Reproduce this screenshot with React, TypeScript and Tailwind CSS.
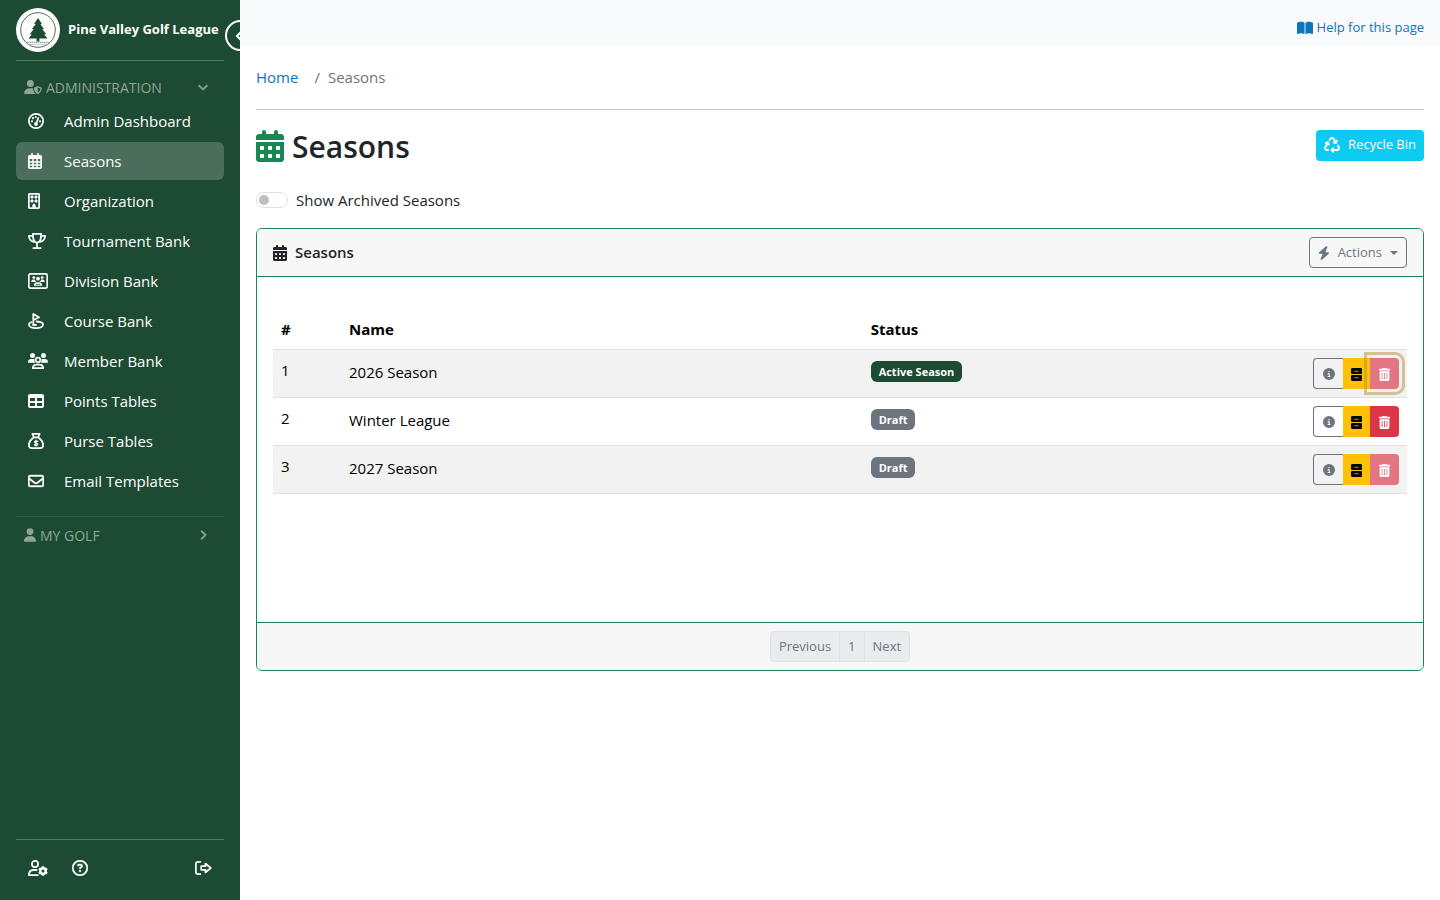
import type { ReactNode } from "react";
import {
  FaBolt,
  FaBookOpen,
  FaCalendarDays,
  FaChevronDown,
  FaChevronRight,
  FaCircleInfo,
  FaRecycle,
  FaRegBuilding,
  FaRegCircleQuestion,
  FaRegEnvelope,
  FaTable,
  FaTrashCan,
  FaUser,
  FaUserShield,
} from "react-icons/fa6";

interface Season {
  id: number;
  name: string;
  status: "Active Season" | "Draft";
  canDelete: boolean;
  highlighted?: boolean;
}

const seasons: Season[] = [
  { id: 1, name: "2026 Season", status: "Active Season", canDelete: false, highlighted: true },
  { id: 2, name: "Winter League", status: "Draft", canDelete: true },
  { id: 3, name: "2027 Season", status: "Draft", canDelete: false },
];

function LogoMark() {
  return (
    <svg viewBox="0 0 44 44" className="size-11 shrink-0" aria-hidden="true">
      <circle cx="22" cy="22" r="22" fill="#fff" />
      <circle cx="22" cy="22" r="17.3" fill="#fbfcfb" stroke="#4f6b5b" strokeWidth="1" />
      <path
        d="M22 10l4 6h-1.7l3.7 5h-1.8l4 5.200h-2l3.200 4.300h-8v3h-2.800v-3h-8l3.200-4.300h-2l4-5.200h-1.800l3.700-5H18z"
        fill="#1d4b33"
      />
      <path d="M10.500 34.300h23" stroke="#8a9c91" strokeWidth="1.200" strokeDasharray="1.200 .7" />
      <path d="M13 36.500h18" stroke="#b3c0b8" strokeWidth=".7" />
    </svg>
  );
}

function GaugeIcon() {
  return (
    <svg viewBox="0 0 16 16" className="size-4" fill="none" stroke="currentColor" strokeWidth="1.700">
      <circle cx="8" cy="8" r="7.150" />
      <path d="M8.300 10.200l2-5.200" strokeLinecap="round" />
      <circle cx="8" cy="11" r="1.900" fill="currentColor" stroke="none" />
      <g fill="currentColor" stroke="none">
        <circle cx="4" cy="8.300" r="1.100" />
        <circle cx="5" cy="5.200" r="1.100" />
        <circle cx="7.800" cy="4" r="1.100" />
        <circle cx="12" cy="8.300" r="1.100" />
      </g>
    </svg>
  );
}

function CalendarGridIcon() {
  return (
    <svg viewBox="0 0 14 16" className="h-4" fill="none" stroke="currentColor">
      <path d="M4 .8v3M10 .8v3" strokeWidth="1.700" strokeLinecap="round" />
      <path d="M0 4a2 2 0 012-2h10a2 2 0 012 2v2H0z" fill="currentColor" stroke="none" />
      <rect x=".8" y="3" width="12.400" height="12.200" rx="1.300" strokeWidth="1.700" />
      <path d="M1 9h12M1 12h12M5 6v9M9 6v9" strokeWidth="1.500" />
    </svg>
  );
}

function TrophyIcon() {
  return (
    <svg
      viewBox="0 0 18 16"
      className="h-4"
      fill="none"
      stroke="currentColor"
      strokeWidth="1.700"
      strokeLinecap="round"
      strokeLinejoin="round"
    >
      <path d="M4.800 .9h8.400c0 5-1.200 8.700-4.200 8.700S4.800 5.900 4.800 .9z" />
      <path d="M4.700 2.800H.9c0 3.500 2 5.400 5 6M13.300 2.800h3.800c0 3.500-2 5.400-5 6M9 9.800v5M5.300 15.100h7.400" />
    </svg>
  );
}

function PeopleIcon() {
  return (
    <svg viewBox="0 0 20 16" className="h-4" fill="none" stroke="currentColor">
      <g fill="currentColor" stroke="none">
        <circle cx="4.500" cy="2.500" r="2.500" />
        <circle cx="15.500" cy="2.500" r="2.500" />
        <path d="M0 9.200C0 7.200 1.400 6 3.200 6h2.200c.4 0 .8.100 1.100.2-.3 1.300 0 2.500.8 3.500H.5a.5.5 0 01-.5-.5zM20 9.200c0-2-1.400-3.200-3.200-3.200h-2.200c-.4 0-.8.100-1.100.2.3 1.300 0 2.500-.8 3.500h6.800c.3 0 .5-.2.5-.5z" />
      </g>
      <circle cx="10" cy="7" r="2.300" strokeWidth="1.700" />
      <path
        d="M4.800 15.100c.2-2.200 1.700-3.500 3.700-3.500h3c2 0 3.500 1.300 3.700 3.500z"
        strokeWidth="1.800"
        strokeLinejoin="round"
      />
    </svg>
  );
}

function ScreenUsersIcon() {
  return (
    <svg viewBox="0 0 20 16" className="h-4" fill="currentColor">
      <rect x=".8" y=".8" width="18.400" height="14.400" rx="1.800" fill="none" stroke="currentColor" strokeWidth="1.700" />
      <circle cx="5.800" cy="4.600" r="1.400" />
      <circle cx="14.200" cy="4.600" r="1.400" />
      <circle cx="10" cy="5.700" r="1.900" />
      <path d="M3.200 8.900c0-1.400.9-2.400 2.200-2.400h1.400c.4 1.300 1 1.900 1.300 2.400zM16.800 8.900c0-1.400-.9-2.400-2.200-2.400h-1.400c-.4 1.300-1 1.900-1.300 2.400z" />
      <path d="M5.800 12.800c0-2.200 1.300-3.600 3.100-3.600h2.200c1.800 0 3.100 1.400 3.100 3.600z" />
      <path d="M8 11.300h4" stroke="#1d4a32" strokeWidth=".8" />
    </svg>
  );
}

function GolfFlagIcon() {
  return (
    <svg
      viewBox="0 0 16 16"
      className="size-4"
      fill="none"
      stroke="currentColor"
      strokeWidth="1.800"
      strokeLinecap="round"
      strokeLinejoin="round"
    >
      <path d="M5.300 11.800V1l5.700 3.200-5.700 3" />
      <path d="M3.300 9.200C1.800 9.800.9 10.600.9 11.600.9 13.600 4 15.100 8 15.100s7.100-1.500 7.100-3.500S12.500 8.700 8.700 8.500" />
      <path d="M5.300 12h2.700" />
    </svg>
  );
}

function SackIcon() {
  return (
    <svg viewBox="0 0 16 16" className="size-4" fill="none" stroke="currentColor" strokeLinejoin="round">
      <path
        d="M4.300.9h7.400L10 4.300H6zM6 4.300C3.500 6 .9 9 .9 12.300c0 1.800 1 2.800 2.900 2.800h8.400c1.900 0 2.900-1 2.900-2.800C15.100 9 12.500 6 10 4.300z"
        strokeWidth="1.700"
      />
      <path
        d="M9.800 8.400C9 8 6.500 7.700 6.500 9s3.200.8 3.200 2.200c0 1.300-2.400 1.100-3.400.6M8 7.100v6"
        strokeWidth="1.300"
        strokeLinecap="round"
      />
    </svg>
  );
}

function UserGearIcon() {
  return (
    <svg viewBox="0 0 20 16" className="h-4" fill="none" stroke="currentColor" strokeWidth="1.800">
      <circle cx="7" cy="4" r="3.100" />
      <path d="M9.800 15.100H.9c0-3.200 2-5.100 4.700-5.100h3" strokeLinecap="round" strokeLinejoin="round" />
      <circle cx="15" cy="11" r="2.700" strokeWidth="2.400" />
      <path
        d="M15 6.200v2M15 13.800v2M10.900 8.600l1.700 1M17.400 12.400l1.700 1M10.900 13.400l1.700-1M17.400 9.600l1.700-1"
        strokeWidth="2.400"
      />
    </svg>
  );
}

function SignOutIcon() {
  return (
    <svg
      viewBox="0 0 17 16"
      className="h-4"
      fill="none"
      stroke="currentColor"
      strokeWidth="1.700"
      strokeLinecap="round"
      strokeLinejoin="round"
    >
      <path d="M5.300 1.800H3.200C1.800 1.800.9 2.700.9 4v8c0 1.300.9 2.200 2.300 2.200h2.100" />
      <path d="M6.200 6.200h4.200V3.500L15.800 8l-5.400 4.500V9.800H6.200z" />
    </svg>
  );
}

function CabinetIcon() {
  return (
    <svg viewBox="0 0 12 14" className="h-[13px]" fill="#000">
      <rect x="0" y="0" width="12" height="6.500" rx="1.500" />
      <rect x="0" y="7.500" width="12" height="6.500" rx="1.500" />
      <path d="M3.500 3.500h5M3.500 10.500h5" stroke="#ffc107" strokeWidth=".8" />
    </svg>
  );
}

const navItems: { label: string; icon: ReactNode; active?: boolean }[] = [
  { label: "Admin Dashboard", icon: <GaugeIcon /> },
  { label: "Seasons", icon: <CalendarGridIcon />, active: true },
  { label: "Organization", icon: <FaRegBuilding className="w-3 h-4 stroke-[14]" /> },
  { label: "Tournament Bank", icon: <TrophyIcon /> },
  { label: "Division Bank", icon: <ScreenUsersIcon /> },
  { label: "Course Bank", icon: <GolfFlagIcon /> },
  { label: "Member Bank", icon: <PeopleIcon /> },
  { label: "Points Tables", icon: <FaTable className="size-4" /> },
  { label: "Purse Tables", icon: <SackIcon /> },
  { label: "Email Templates", icon: <FaRegEnvelope className="size-4 stroke-[12]" /> },
];

function Sidebar() {
  return (
    <aside className="relative w-60 shrink-0 overflow-hidden bg-[#1d4a32] px-4 pt-2 text-white flex flex-col">
      <a href="#" className="flex items-center gap-2 pb-2 border-b border-[#4b7d61]">
        <LogoMark />
        <span className="text-[13px] font-bold whitespace-nowrap">Pine Valley Golf League</span>
      </a>
      <button
        type="button"
        aria-label="Collapse sidebar"
        className="absolute top-5 -right-4 size-[31px] rounded-full border-2 border-white bg-[#1d4a32] flex items-center pl-2"
      >
        <svg viewBox="0 0 8 10" className="h-2.5" fill="none" stroke="currentColor" strokeWidth="2">
          <path d="M6 1L2 5l4 4" />
        </svg>
      </button>

      <button type="button" className="mt-3.5 h-6 px-2 flex items-center gap-1 text-[14px] text-[#8ea598]">
        <FaUserShield className="h-3.5 w-[18px]" />
        <span>ADMINISTRATION</span>
        <FaChevronDown className="ml-auto mr-2 size-2.5 stroke-[40]" />
      </button>

      <nav className="mt-[3px] flex flex-col gap-0.5">
        {navItems.map((item) => (
          <a
            key={item.label}
            href="#"
            className={`h-[38px] px-3 flex items-center rounded-md text-[15px] ${item.active ? "bg-[#4a6e5b]" : ""}`}
          >
            <span className="w-9 flex">{item.icon}</span>
            {item.label}
          </a>
        ))}
      </nav>

      <div className="mt-4 pt-1.5 border-t border-[#2d5841]">
        <button type="button" className="w-full h-6 px-2 flex items-center gap-1 text-[14px] text-[#8ea598]">
          <FaUser className="h-3.5 w-3" />
          <span>MY GOLF</span>
          <FaChevronRight className="ml-auto mr-2 size-2.5 stroke-[40]" />
        </button>
      </div>

      <div className="mt-auto h-[61px] px-3 pb-1 flex items-center border-t border-[#4b7d61]">
        <button type="button" aria-label="Account settings">
          <UserGearIcon />
        </button>
        <button type="button" aria-label="Support" className="ml-6">
          <FaRegCircleQuestion className="size-4 stroke-[12]" />
        </button>
        <button type="button" aria-label="Sign out" className="ml-auto">
          <SignOutIcon />
        </button>
      </div>
    </aside>
  );
}

function RowActions({ season }: { season: Season }) {
  return (
    <div className="flex justify-end">
      <button
        type="button"
        aria-label={`${season.name} details`}
        className="w-[30px] h-[31px] pt-0.5 flex items-center justify-center rounded-l border border-r-0 border-[#6c757d] text-[#6c757d]"
      >
        <FaCircleInfo className="size-3" />
      </button>
      <button
        type="button"
        aria-label={`Archive ${season.name}`}
        className="w-[27px] h-[31px] pt-0.5 flex items-center justify-center bg-[#ffc107]"
      >
        <CabinetIcon />
      </button>
      <button
        type="button"
        aria-label={`Delete ${season.name}`}
        disabled={!season.canDelete}
        className={`w-[29px] h-[31px] pt-0.5 flex items-center justify-center rounded-r text-white ${
          season.canDelete ? "bg-[#dc3545]" : "bg-[#e27681]"
        } ${season.highlighted ? "outline-3 outline-offset-3 outline-[#b58e3c]/50" : ""}`}
      >
        <FaTrashCan className="size-[13px]" />
      </button>
    </div>
  );
}

function SeasonsTable() {
  return (
    <table className="w-full mt-4 table-fixed text-left text-[15px] text-black">
      <thead>
        <tr className="h-10 border-b border-[#dee2e6]">
          <th className="w-[68px] px-2 font-bold">#</th>
          <th className="w-[46%] px-2 font-bold">Name</th>
          <th className="px-2 font-bold">Status</th>
          <th className="w-28 px-2" aria-label="Actions"></th>
        </tr>
      </thead>
      <tbody>
        {seasons.map((season) => (
          <tr key={season.id} className="h-12 border-b border-[#dee2e6] odd:bg-[#f2f2f2]">
            <td className="px-2 pb-1.5">{season.id}</td>
            <td className="px-2 pb-0.5">{season.name}</td>
            <td className="px-2 pb-1.5">
              <span
                className={`inline-block h-[21px] px-2 rounded-md text-[11px] leading-[21px] font-bold text-white ${
                  season.status === "Draft" ? "bg-[#6c757d]" : "bg-[#1d4a32]"
                }`}
              >
                {season.status}
              </span>
            </td>
            <td className="px-2">
              <RowActions season={season} />
            </td>
          </tr>
        ))}
      </tbody>
    </table>
  );
}

export default function App() {
  return (
    <div className="min-h-screen flex bg-white text-[15px] text-[#212529] font-['Open_Sans','Noto_Sans',sans-serif]">
      <Sidebar />
      <div className="flex-1 min-w-0">
        <header className="h-[45px] px-4 pt-2.5 flex items-center justify-end bg-[#f8fafc]">
          <a href="#" className="flex items-center gap-1 text-[13px] text-[#0b76bd]">
            <FaBookOpen className="size-4" />
            Help for this page
          </a>
        </header>

        <main className="px-4">
          <nav aria-label="Breadcrumb" className="h-16 flex items-center">
            <a href="#" className="text-[#0b76bd]">
              Home
            </a>
            <span className="ml-4 text-[#6c757d]">/</span>
            <span className="ml-2 text-[#6c757d]">Seasons</span>
          </nav>
          <hr className="border-[#c3c5c7]" />

          <div className="mt-4 flex items-center justify-between">
            <h1 className="h-10 flex items-center gap-2 text-[30px] font-semibold">
              <FaCalendarDays className="h-8 w-7 text-[#198754]" />
              Seasons
            </h1>
            <button
              type="button"
              className="mb-0.5 h-[31px] px-2 flex items-center gap-2 rounded bg-[#0dcaf0] text-[13px] text-white"
            >
              <FaRecycle className="size-4" />
              Recycle Bin
            </button>
          </div>

          <label className="mt-[22px] h-6 flex items-center gap-2">
            <input
              type="checkbox"
              role="switch"
              className="appearance-none w-8 h-4 rounded-full border border-[#dee2e6] bg-white flex items-center before:ml-0.5 before:size-2.5 before:rounded-full before:bg-[#bfbfbf] checked:before:ml-4"
            />
            Show Archived Seasons
          </label>

          <section className="mt-4 rounded-md border border-[#198754] overflow-hidden">
            <div className="h-12 px-4 flex items-center justify-between bg-[#f7f7f7] border-b border-[#198754]">
              <h2 className="flex items-center gap-2 font-semibold">
                <FaCalendarDays className="h-4 w-3.5" />
                Seasons
              </h2>
              <button
                type="button"
                className="h-[31px] px-2 flex items-center gap-2 rounded border border-[#6c757d] text-[13px] text-[#6c757d]"
              >
                <FaBolt className="h-3.5 w-3" />
                Actions
                <span className="border-x-4 border-t-4 border-x-transparent border-t-[#6c757d]"></span>
              </button>
            </div>
            <div className="min-h-[345px] p-4">
              <SeasonsTable />
            </div>
            <div className="h-12 flex items-center justify-center bg-[#f7f7f7] border-t border-[#198754]">
              <div className="h-[31px] flex rounded border border-[#dee2e6] bg-[#e9ecef] text-[13px] text-[#6c757d] divide-x divide-[#dee2e6]">
                <button type="button" className="px-2">
                  Previous
                </button>
                <button type="button" className="px-2">
                  1
                </button>
                <button type="button" className="px-2">
                  Next
                </button>
              </div>
            </div>
          </section>
        </main>
      </div>
    </div>
  );
}
